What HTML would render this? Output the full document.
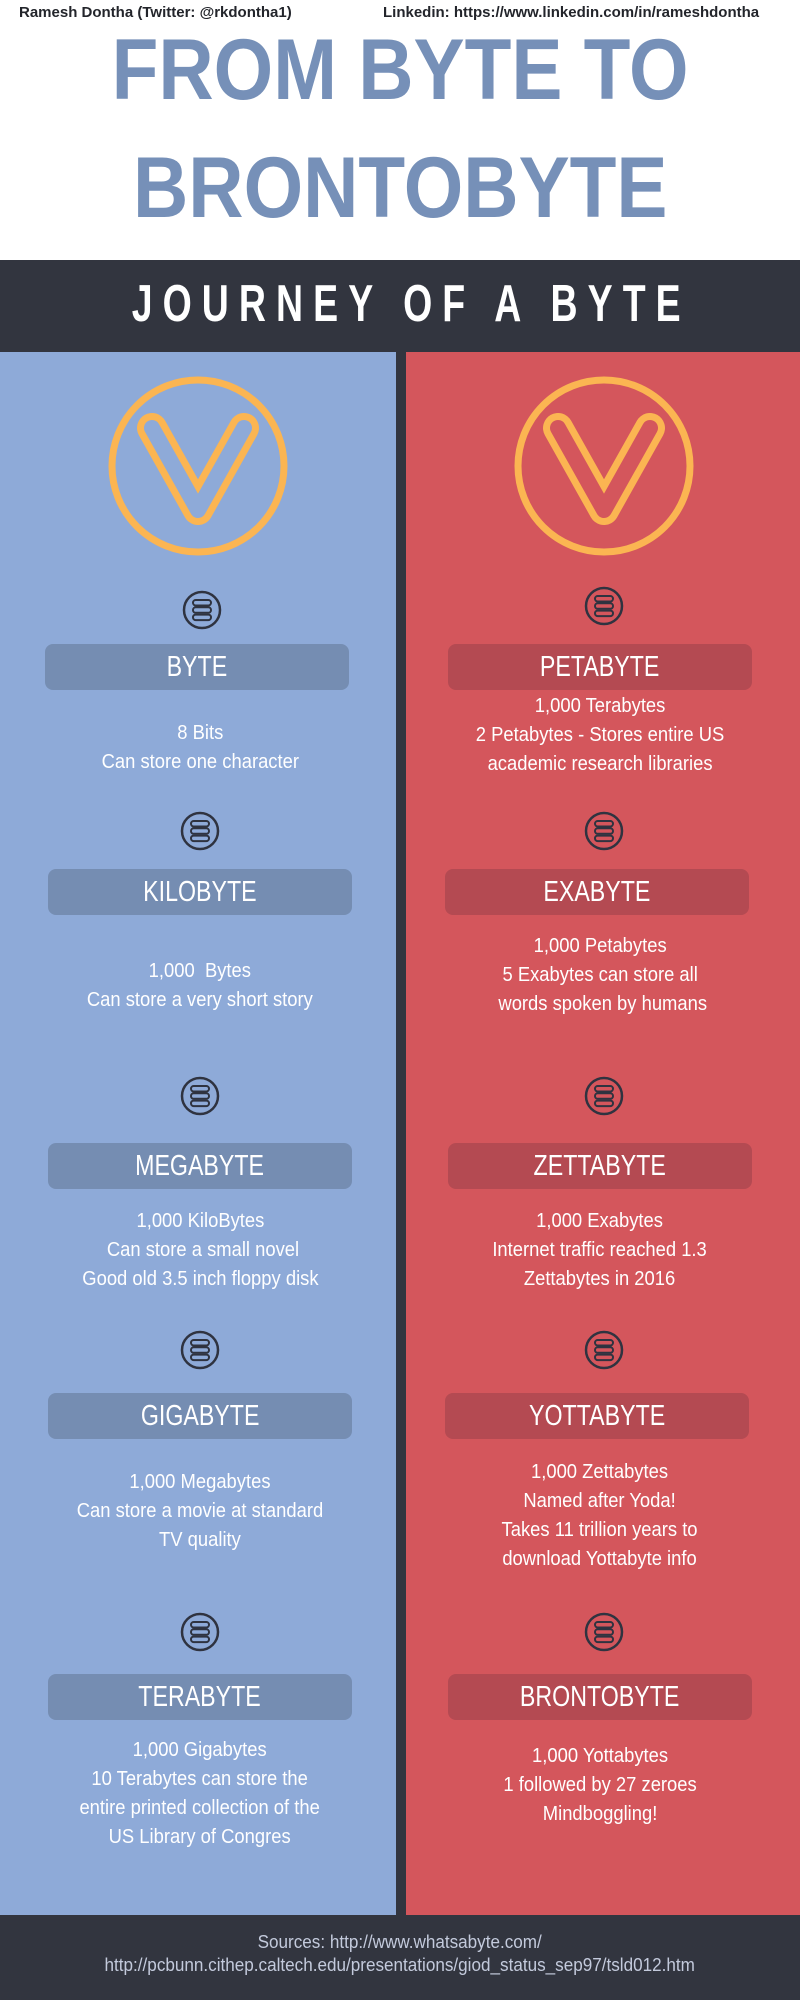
<!DOCTYPE html>
<html><head><meta charset="utf-8">
<style>
*{margin:0;padding:0;box-sizing:border-box}
body{width:800px;height:2000px;position:relative;background:#fff;font-family:"Liberation Sans",sans-serif;overflow:hidden}
.a{position:absolute}
.top{top:4px;font-weight:bold;font-size:15px;color:#23252b;white-space:nowrap}
.title{left:0;width:800px;text-align:center;color:#7690b8;font-weight:bold;font-size:86px;line-height:86px;white-space:nowrap}
.title span{display:inline-block;transform:scaleX(0.89)}
.pill{height:46px;border-radius:8px;color:#fff;text-align:center;font-size:29px;line-height:46px}
.pill span{display:inline-block;transform:scaleX(0.8)}
.L .pill{background:#758db2}
.R .pill{background:#b44a52}
.t{width:400px;text-align:center;color:#fff;font-size:20px;line-height:29px;white-space:nowrap}
.t span{display:inline-block;transform:scaleX(0.92)}
</style></head><body>
<div class="a top" style="left:19px">Ramesh Dontha (Twitter: @rkdontha1)</div>
<div class="a top" style="left:383px">Linkedin: https://www.linkedin.com/in/rameshdontha</div>
<div class="a title" style="top:27px"><span>FROM BYTE TO</span></div>
<div class="a title" style="top:145px"><span>BRONTOBYTE</span></div>
<div class="a" style="left:0;top:260px;width:800px;height:92px;background:#32353f"></div>
<div class="a" style="left:11px;top:278px;width:800px;text-align:center;color:#fff;font-weight:bold;font-size:52px;line-height:52px;white-space:nowrap"><span style="display:inline-block;transform:scaleX(0.72);letter-spacing:14px">JOURNEY OF A BYTE</span></div>
<div class="a" style="left:0;top:352px;width:396px;height:1563px;background:#8eaad8"></div>
<div class="a" style="left:396px;top:352px;width:10px;height:1563px;background:#32353f"></div>
<div class="a" style="left:406px;top:352px;width:394px;height:1563px;background:#d4565c"></div>
<div class="a" style="left:0;top:1915px;width:800px;height:85px;background:#32353f"></div>
<div class="a" style="left:0;top:1931px;width:800px;text-align:center;color:#c3cadc;font-size:18px;line-height:23px;white-space:nowrap"><span style="display:inline-block;transform:scaleX(0.95)">Sources: http://www.whatsabyte.com/<br>http://pcbunn.cithep.caltech.edu/presentations/giod_status_sep97/tsld012.htm</span></div>

<svg class="a" style="left:0;top:0" width="800" height="2000">
<defs>
<g id="big">
<circle cx="0" cy="0" r="86" fill="none" stroke="#fbb552" stroke-width="7"/>
<polyline points="-46,-38 0,44 46,-38" fill="none" stroke="#fbb552" stroke-width="30" stroke-linecap="round" stroke-linejoin="round"/>
</g>
<g id="sm">
<circle cx="0" cy="0" r="18" fill="none" stroke="#2f3340" stroke-width="2.5"/>
<rect x="-9" y="-10" width="18" height="5.5" rx="2.7" fill="none" stroke="#2f3340" stroke-width="2"/>
<rect x="-9" y="-2.7" width="18" height="5.5" rx="2.7" fill="none" stroke="#2f3340" stroke-width="2"/>
<rect x="-9" y="4.6" width="18" height="5.5" rx="2.7" fill="none" stroke="#2f3340" stroke-width="2"/>
</g>
</defs>
<use href="#big" x="198" y="466"/>
<polyline points="152,428 198,510 244,428" fill="none" stroke="#8eaad8" stroke-width="16" stroke-linecap="round" stroke-linejoin="round"/>
<use href="#big" x="604" y="466"/>
<polyline points="558,428 604,510 650,428" fill="none" stroke="#d4565c" stroke-width="16" stroke-linecap="round" stroke-linejoin="round"/>
<use href="#sm" x="202" y="610"/><use href="#sm" x="604" y="606"/>
<use href="#sm" x="200" y="831"/><use href="#sm" x="604" y="831"/>
<use href="#sm" x="200" y="1096"/><use href="#sm" x="604" y="1096"/>
<use href="#sm" x="200" y="1350"/><use href="#sm" x="604" y="1350"/>
<use href="#sm" x="200" y="1632"/><use href="#sm" x="604" y="1632"/>
</svg>

<div class="L">
<div class="a pill" style="left:45px;top:644px;width:304px"><span>BYTE</span></div>
<div class="a t" style="left:0;top:719px"><span>8 Bits<br>Can store one character</span></div>
<div class="a pill" style="left:48px;top:869px;width:304px"><span>KILOBYTE</span></div>
<div class="a t" style="left:0;top:957px"><span>1,000&nbsp; Bytes<br>Can store a very short story</span></div>
<div class="a pill" style="left:48px;top:1143px;width:304px"><span>MEGABYTE</span></div>
<div class="a t" style="left:0;top:1207px"><span>1,000 KiloBytes<br>&nbsp;Can store a small novel<br>Good old 3.5 inch floppy disk</span></div>
<div class="a pill" style="left:48px;top:1393px;width:304px"><span>GIGABYTE</span></div>
<div class="a t" style="left:0;top:1468px"><span>1,000 Megabytes<br>Can store a movie at standard<br>TV quality</span></div>
<div class="a pill" style="left:48px;top:1674px;width:304px"><span>TERABYTE</span></div>
<div class="a t" style="left:0;top:1736px"><span>1,000 Gigabytes<br>10 Terabytes can store the<br>entire printed collection of the<br>US Library of Congres</span></div>
</div>
<div class="R">
<div class="a pill" style="left:448px;top:644px;width:304px"><span>PETABYTE</span></div>
<div class="a t" style="left:400px;top:692px"><span>1,000 Terabytes<br>2 Petabytes - Stores entire US<br>academic research libraries</span></div>
<div class="a pill" style="left:445px;top:869px;width:304px"><span>EXABYTE</span></div>
<div class="a t" style="left:400px;top:932px"><span>1,000 Petabytes<br>5 Exabytes can store all<br>&nbsp;words spoken by humans</span></div>
<div class="a pill" style="left:448px;top:1143px;width:304px"><span>ZETTABYTE</span></div>
<div class="a t" style="left:400px;top:1207px"><span>1,000 Exabytes<br>Internet traffic reached 1.3<br>Zettabytes in 2016</span></div>
<div class="a pill" style="left:445px;top:1393px;width:304px"><span>YOTTABYTE</span></div>
<div class="a t" style="left:400px;top:1458px"><span>1,000 Zettabytes<br>Named after Yoda!<br>Takes 11 trillion years to<br>download Yottabyte info</span></div>
<div class="a pill" style="left:448px;top:1674px;width:304px"><span>BRONTOBYTE</span></div>
<div class="a t" style="left:400px;top:1742px"><span>1,000 Yottabytes<br>1 followed by 27 zeroes<br>Mindboggling!</span></div>
</div>
</body></html>
